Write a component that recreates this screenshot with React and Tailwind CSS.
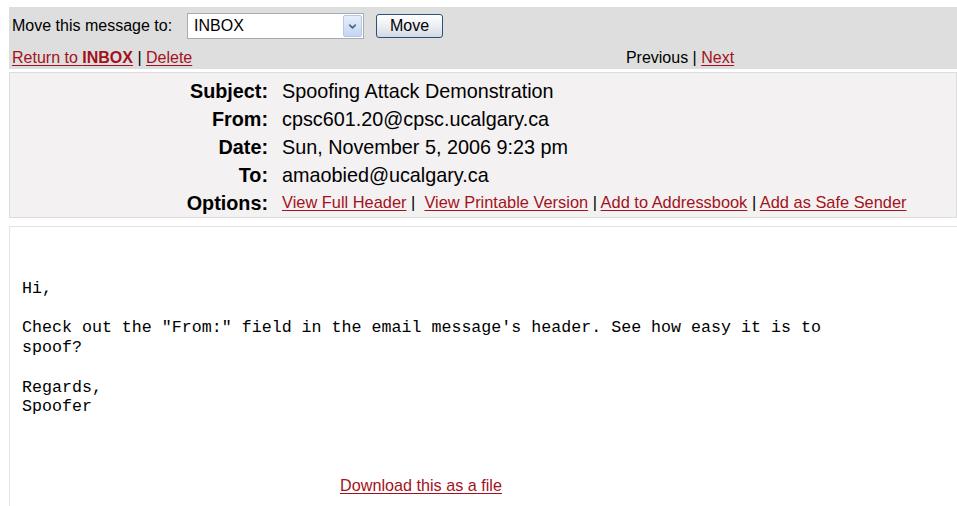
import { ChevronDown } from 'lucide-react';

const link = 'text-[#a3121c] underline underline-offset-[2px] decoration-[1px]';

const HeaderRow = ({ label, children }) => (
  <div className="flex items-baseline h-[28px] leading-[28px]">
    <div className="w-[272px] shrink-0 text-right font-bold pr-[14px]">{label}</div>
    <div className="flex-1">{children}</div>
  </div>
);

const MoveBar = () => (
  <div className="bg-[#dedede] ml-[9px] h-[62px] pt-[6px] pl-[3px] text-[16px] text-black">
    <div className="flex items-center h-[26px]">
      <span>Move this message to:</span>
      <div className="ml-[15px] w-[177px] h-[26px] bg-white border border-[#a5acb5] flex items-center justify-between pl-[6px] pr-[1px]">
        <span>INBOX</span>
        <span className="w-[19px] h-[22px] rounded-[2px] border border-[#b7c8e3] bg-gradient-to-b from-[#e6eefc] to-[#c5d5f2] flex items-center justify-center">
          <ChevronDown className="w-[11px] h-[11px] text-[#4d6185]" strokeWidth={3.5} />
        </span>
      </div>
      <button className="ml-[12px] w-[67px] h-[24px] rounded-[3px] border border-[#2d4f78] bg-gradient-to-b from-[#ffffff] via-[#eceef3] to-[#d3d9e4] text-[16px] leading-none">
        Move
      </button>
    </div>
    <div className="flex mt-[7px] h-[24px] items-center">
      <div className="w-[393px]">
        <a className={link}>Return to <b>INBOX</b></a> | <a className={link}>Delete</a>
      </div>
      <div className="flex-1 text-center pr-[2px]">
        Previous | <a className={link}>Next</a>
      </div>
    </div>
  </div>
);

const MessageHeader = () => (
  <div className="ml-[9px] mt-[3px] h-[146px] bg-[#f3f1f2] border border-[#dcdcdc] pt-[4px] text-[19.8px] text-black">
    <HeaderRow label="Subject:">Spoofing Attack Demonstration</HeaderRow>
    <HeaderRow label="From:">cpsc601.20@cpsc.ucalgary.ca</HeaderRow>
    <HeaderRow label="Date:">Sun, November 5, 2006 9:23 pm</HeaderRow>
    <HeaderRow label="To:">amaobied@ucalgary.ca</HeaderRow>
    <HeaderRow label="Options:">
      <span className="text-[16.4px] relative top-[-2px]">
        <a className={link}>View Full Header</a> |&nbsp; <a className={link}>View Printable Version</a> |{' '}
        <a className={link}>Add to Addressbook</a> | <a className={link}>Add as Safe Sender</a>
      </span>
    </HeaderRow>
  </div>
);

const body = `

Hi,

Check out the "From:" field in the email message's header. See how easy it is to
spoof?

Regards,
Spoofer`;

const MessageBody = () => (
  <div className="ml-[9px] mt-[8px] h-[280px] bg-white border-t border-l border-[#e3e3e3]">
    <pre className="pl-[12px] pt-[12px] text-[16.65px] leading-[19.8px] text-black font-['Liberation_Mono','Courier_New',monospace]">
      {body}
    </pre>
    <div className="mt-[56px] pl-[330px] text-[16.2px]">
      <a className={link}>Download this as a file</a>
    </div>
  </div>
);

export default function App() {
  return (
    <div className="w-[957px] h-[506px] overflow-hidden bg-white pt-[7px] font-['Liberation_Sans',Arial,sans-serif]">
      <MoveBar />
      <MessageHeader />
      <MessageBody />
    </div>
  );
}
